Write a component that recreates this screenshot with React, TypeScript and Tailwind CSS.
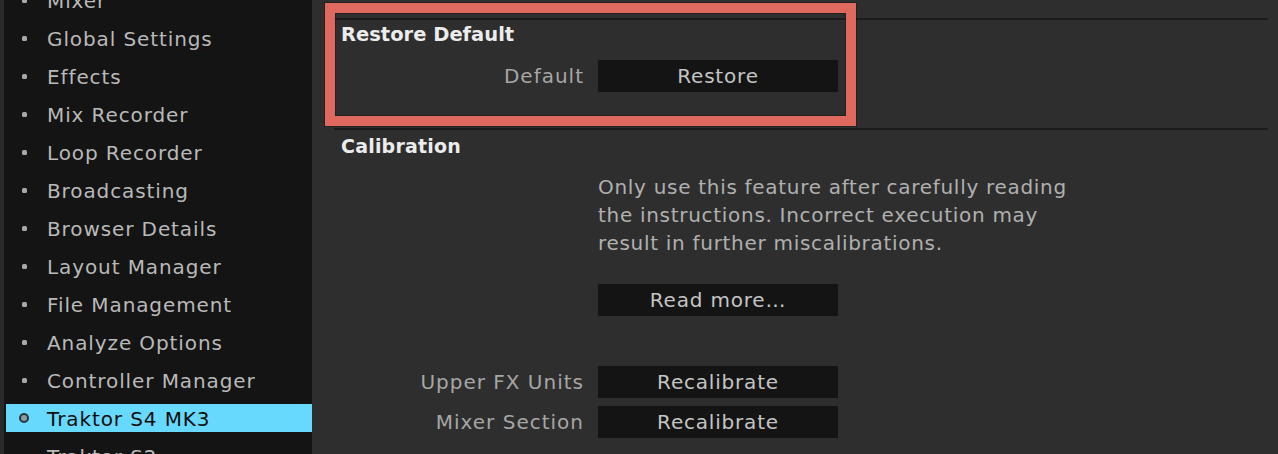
import React from "react";

const items = [
  "Mixer",
  "Global Settings",
  "Effects",
  "Mix Recorder",
  "Loop Recorder",
  "Broadcasting",
  "Browser Details",
  "Layout Manager",
  "File Management",
  "Analyze Options",
  "Controller Manager",
  "Traktor S4 MK3",
  "Traktor S2",
];

const font = { fontFamily: '"DejaVu Sans", "Liberation Sans", sans-serif' };

function Btn({ children }: { children: React.ReactNode }) {
  return (
    <div className="w-[240px] h-[32px] bg-[#141414] flex items-center justify-center text-[20px] leading-[28px] text-[#c4c4c4] tracking-[0.8px]">
      {children}
    </div>
  );
}

function Row({ label, button }: { label: string; button: string }) {
  return (
    <div className="flex items-center gap-[14px]">
      <div className="w-[250px] text-right text-[20px] leading-[28px] text-[#a6a6a6] tracking-[1px]">
        {label}
      </div>
      <Btn>{button}</Btn>
    </div>
  );
}

export default function App() {
  return (
    <div
      className="w-[1278px] h-[454px] overflow-hidden flex bg-[#2e2e2e] antialiased"
      style={font}
    >
      <div className="w-[4px] bg-[#2a2a2a] shrink-0" />
      <div className="w-[308px] shrink-0 bg-[#141414] pl-[2px]">
        <div className="-mt-[19px] flex flex-col">
          {items.map((it) => {
            const sel = it === "Traktor S4 MK3";
            return (
              <div key={it} className="h-[38px] py-[5px]">
                <div
                  className={
                    "h-[28px] flex items-center pl-[13px] " +
                    (sel ? "bg-[#66d9fd]" : "")
                  }
                >
                  <div className="w-[10px] flex items-center justify-center">
                    {sel ? (
                      <div className="w-[10px] h-[10px] rounded-full border-2 border-[#27363c] bg-[#8c9ca2]" />
                    ) : (
                      <div className="w-[5px] h-[5px] rounded-[1.5px] bg-[#a8a8a8]" />
                    )}
                  </div>
                  <div
                    className={
                      "ml-[18px] text-[20px] leading-[28px] tracking-[0.9px] pt-[2px] " +
                      (sel ? "text-[#0c0c0c]" : "text-[#b9b9b9]")
                    }
                  >
                    {it}
                  </div>
                </div>
              </div>
            );
          })}
        </div>
      </div>
      <div className="relative flex-1 pl-[22px] pr-[10px] pt-[18px]">
        <div className="h-[2px] bg-[#1c1c1c]" />
        <div className="pl-[7px] pt-[1px] text-[19.5px] leading-[28px] font-bold text-[#ececec]">
          Restore Default
        </div>
        <div className="mt-[11px]">
          <Row label="Default" button="Restore" />
        </div>
        <div className="mt-[36px] h-[2px] bg-[#1c1c1c]" />
        <div className="pl-[7px] pt-[2px] text-[19px] leading-[28px] font-bold text-[#ececec] tracking-[0.2px]">
          Calibration
        </div>
        <div className="mt-[13px] ml-[264px] text-[20px] leading-[28px] text-[#b0b0b0] tracking-[0.7px]">
          Only use this feature after carefully reading
          <br />
          the instructions. Incorrect execution may
          <br />
          result in further miscalibrations.
        </div>
        <div className="mt-[27px] ml-[264px]">
          <Btn>Read more…</Btn>
        </div>
        <div className="mt-[50px] flex flex-col gap-[8px]">
          <Row label="Upper FX Units" button="Recalibrate" />
          <Row label="Mixer Section" button="Recalibrate" />
        </div>
        <div className="absolute left-[13px] top-[3px] w-[531px] h-[123px] border-[10px] border-[#e0695f] shadow-[0_0_0_1px_rgba(0,0,0,0.25),inset_0_0_0_1px_rgba(0,0,0,0.25)]" />
      </div>
    </div>
  );
}
